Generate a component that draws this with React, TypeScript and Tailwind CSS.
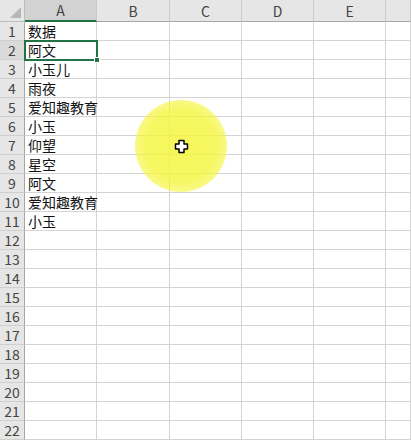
import React from "react";

const cols = ["A", "B", "C", "D", "E", ""];
const widths = [72, 73, 72, 72, 72, 25];
const data: Record<number, string> = {
  1: "数据",
  2: "阿文",
  3: "小玉儿",
  4: "雨夜",
  5: "爱知趣教育",
  6: "小玉",
  7: "仰望",
  8: "星空",
  9: "阿文",
  10: "爱知趣教育",
  11: "小玉",
};

const font = { fontFamily: '"Noto Sans CJK SC", "Microsoft YaHei", sans-serif' };

export default function App() {
  const rows = Array.from({ length: 22 }, (_, i) => i + 1);
  return (
    <div className="relative w-[411px] h-[442px] overflow-hidden bg-white" style={font}>
      {/* header */}
      <div className="flex h-[22px]">
        <div className="w-[25px] h-[22px] bg-[#e6e6e6] border-r border-b border-[#bcbcbc] relative shrink-0">
          <div className="absolute right-[3px] bottom-[3px] w-0 h-0 border-l-[11px] border-l-transparent border-b-[11px] border-b-[#b7b7b7]" />
        </div>
        {cols.map((c, i) => (
          <div
            key={i}
            className={
              "h-[22px] shrink-0 flex items-center justify-center text-[14px] leading-none text-[#444] border-r border-r-[#c9c9c9] " +
              (i === 0
                ? "bg-[#d2d2d2] border-b-2 border-b-[#217346]"
                : "bg-[#e6e6e6] border-b border-b-[#a6a6a6]")
            }
            style={{ width: widths[i] }}
          >
            {c}
          </div>
        ))}
      </div>
      {rows.map((r) => (
        <div key={r} className="flex h-[19px]">
          <div
            className={
              "w-[25px] h-[19px] shrink-0 flex items-center justify-center text-[14px] leading-none text-[#444] border-b border-b-[#cfcfcf] border-r border-r-[#a6a6a6] " +
              (r === 2 ? "bg-[#dadada]" : "bg-[#e6e6e6]")
            }
          >
            {r}
          </div>
          {cols.map((_, i) => (
            <div
              key={i}
              className="h-[19px] shrink-0 border-r border-b border-[#d4d4d4] text-[14px] leading-[19px] text-[#111] pl-[3px] whitespace-nowrap overflow-visible"
              style={{ width: widths[i] }}
            >
              {i === 0 ? data[r] ?? "" : ""}
            </div>
          ))}
        </div>
      ))}
      {/* selection */}
      <div className="absolute left-[24px] top-[40px] w-[74px] h-[21px] border-2 border-[#217346]" />
      <div className="absolute left-[94px] top-[57px] w-[6px] h-[6px] bg-[#217346] border border-white" />
      {/* yellow highlight */}
      <div className="absolute left-[135px] top-[100px] w-[92px] h-[92px] rounded-full bg-[radial-gradient(circle,rgba(245,245,60,0.85)_0%,rgba(245,245,60,0.8)_55%,rgba(245,245,60,0.5)_80%,rgba(245,245,60,0)_100%)]" />
      {/* cursor */}
      <svg className="absolute left-[174px] top-[139px]" width="15" height="15" viewBox="0 0 15 15">
        <path
          d="M5 1.5h5v3.5h3.5v5H10v3.5H5V10H1.5V5H5z"
          fill="white"
          stroke="black"
          strokeWidth="1.5"
          strokeLinejoin="round"
        />
      </svg>
    </div>
  );
}
